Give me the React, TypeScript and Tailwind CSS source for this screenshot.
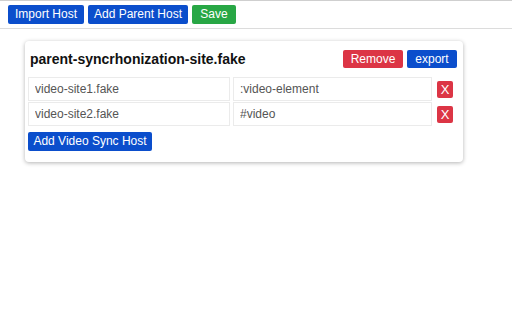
const rows = [
  { host: 'video-site1.fake', selector: ':video-element' },
  { host: 'video-site2.fake', selector: '#video' },
]

const blueBtn = 'bg-[#0b4ecc] text-white text-[12px] leading-[15px] h-[19px] rounded-[2px] whitespace-nowrap'

export default function App() {
  return (
    <div className="min-h-[320px] bg-white font-['Liberation_Sans',Arial,sans-serif] border-t border-[#cfcfcf]">
      <div className="flex gap-[4px] px-[8px] pt-[4px] pb-[4px] border-b border-[#dcdcdc]">
        <button className={`${blueBtn} w-[76px]`}>Import Host</button>
        <button className={`${blueBtn} w-[100px]`}>Add Parent Host</button>
        <button className="bg-[#28a745] text-white text-[12px] leading-[15px] h-[19px] w-[44px] rounded-[2px]">
          Save
        </button>
      </div>

      <div className="ml-[25px] mt-[12px] w-[438px] rounded-[4px] bg-white shadow-[0_1px_4px_rgba(0,0,0,0.3)] pl-[3px] pr-[6px] pt-[9px] pb-[10px]">
        <div className="flex items-center justify-between h-[18px]">
          <h1 className="pl-[2px] text-[14px] font-bold text-[#111]">parent-syncrhonization-site.fake</h1>
          <div className="flex gap-[4px]">
            <button className="bg-[#dc3545] text-white text-[12px] leading-[15px] h-[18px] w-[60px] rounded-[2px]">
              Remove
            </button>
            <button className="bg-[#0b4ecc] text-white text-[12px] leading-[15px] h-[18px] w-[50px] rounded-[2px]">
              export
            </button>
          </div>
        </div>

        <div className="mt-[9px] flex flex-col gap-[1px]">
          {rows.map((r) => (
            <div key={r.host} className="flex items-center">
              <input
                readOnly
                value={r.host}
                className="w-[202px] h-[24px] border border-[#ebebeb] px-[6px] text-[12px] text-[#555] outline-none"
              />
              <input
                readOnly
                value={r.selector}
                className="ml-[3px] w-[199px] h-[24px] border border-[#ebebeb] px-[6px] text-[12px] text-[#555] outline-none"
              />
              <button className="ml-[5px] w-[16px] h-[17px] bg-[#dc3545] text-white text-[13px] leading-[17px] rounded-[2px]">
                X
              </button>
            </div>
          ))}
        </div>

        <button className={`${blueBtn} mt-[6px] w-[124px]`}>Add Video Sync Host</button>
      </div>
    </div>
  )
}
